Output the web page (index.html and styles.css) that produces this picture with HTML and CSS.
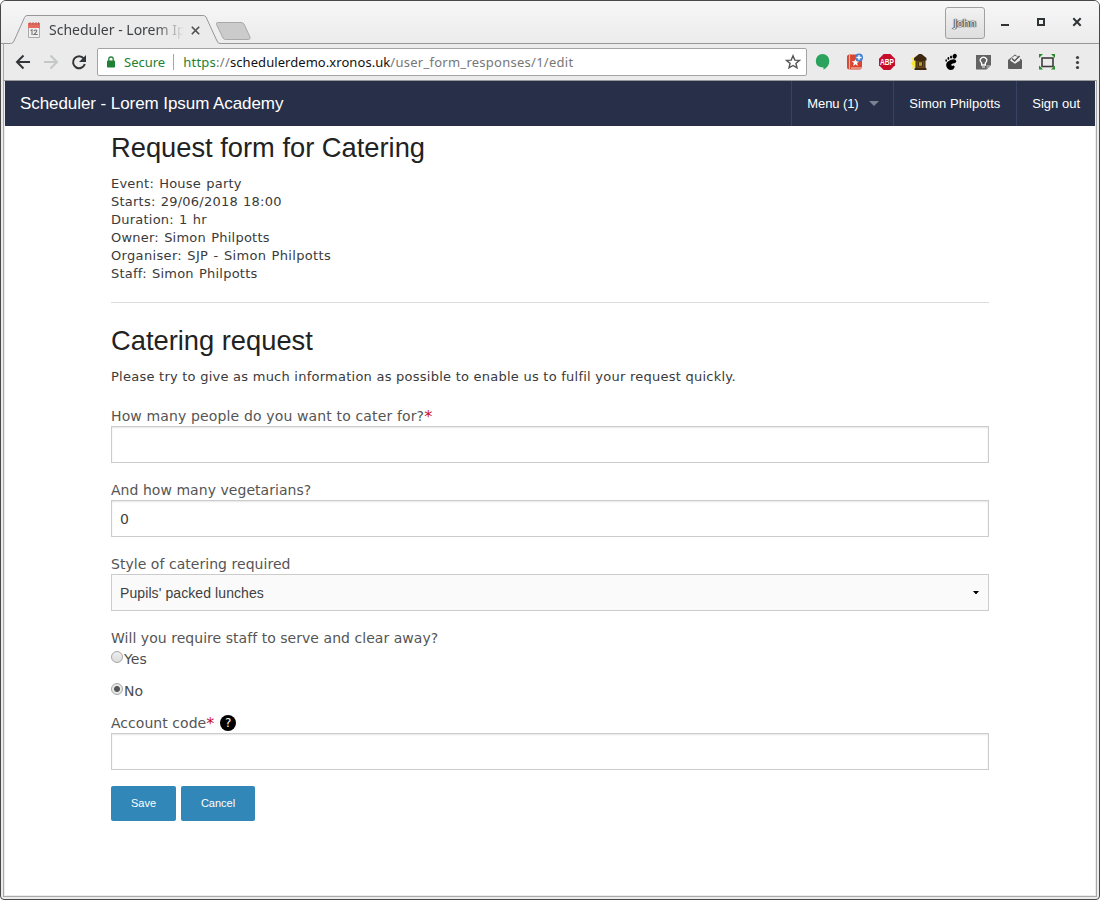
FILE: index.html
```html
<!DOCTYPE html>
<html lang="en">
<head>
<meta charset="utf-8">
<title>Scheduler - Lorem Ipsum Academy</title>
<link rel="stylesheet" href="styles.css">
</head>
<body>
<div class="window">
  <header class="titlebar">
    <svg class="tab-shape" width="1098" height="43" viewBox="1 1 1098 43">
      <path d="M5 44V43.5H10.5Q13 43.5 14 41L25 17Q26 15.500 27 15.500H203Q205 15.500 206 17L217 41Q218 43.500 220 43.500H1095V44Z" fill="#ebebeb"/>
      <path d="M1 43.500H10.500Q13 43.500 14 41L24.500 17.500Q25.500 15.500 27 15.500H203.500Q205 15.500 206 17L217 41Q218 43.500 220 43.500H1099" fill="none" stroke="#979797"/>
      <path d="M217.500 22.500H241Q243 22.500 244 24L250 37Q250.500 39.500 248.500 39.500H226Q224 39.500 223 38L216.500 24.500Q216 22.500 217.500 22.500Z" fill="#cbcbcb" stroke="#a9a9a9"/>
    </svg>
    <div class="tab">
      <svg class="favicon" width="12" height="16" viewBox="0 0 12 16"><path d="M.5 1.500H11.500V15.500H.5Z" fill="#f0f0f0" stroke="#aaa"/><path d="M0 1H12V6H0Z" fill="#e66c5f"/><path d="M2 0V3M5 0V3M8 0V3M10.500 0V3" stroke="#ad5751" stroke-width=".8"/><path d="M2.500 8.500L4 7.800V13M5.800 9Q8 7 8.800 8.800Q8.800 10 6 12.500H9.800" fill="none" stroke="#777" stroke-width="1.100"/></svg>
      <span class="tab-title">Scheduler - Lorem Ip</span>
      <svg class="tab-close" width="9" height="9" viewBox="0 0 9 9"><path d="M.8.8L8.200 8.200M8.200.8L.8 8.200" stroke="#4d4d4d" stroke-width="1.600"/></svg>
    </div>
    <div class="window-controls">
      <span class="profile">John</span>
      <svg width="88" height="16" viewBox="1000 15 88 16"><path d="M1001 25H1009" stroke="#2e3436" stroke-width="2"/><rect x="1038" y="19" width="6" height="6" fill="none" stroke="#2e3436" stroke-width="2"/><path d="M1073.300 18.300L1080.700 25.700M1080.700 18.300L1073.300 25.700" stroke="#2e3436" stroke-width="2"/></svg>
    </div>
  </header>
  <div class="toolbar">
    <svg class="nav" width="84" height="24" viewBox="8 50 84 24" fill="none" stroke="#333638" stroke-width="2"><path d="M30 62H17.500M23.500 55.500L17 62L23.500 68.500"/><path d="M44 62H56.500M50.500 55.500L57 62L50.500 68.500" stroke="#c5c7c7"/><path d="M83.700 58.400A6 6 0 1 0 84.800 64"/><path d="M86 55V62H79Z" fill="#333638" stroke="none"/></svg>
    <div class="address">
      <svg width="8" height="12" viewBox="0 0 8 12"><rect y="4.500" width="8" height="7" rx=".8" fill="#208134"/><path d="M1.800 5V3Q1.800 1 4 1Q6.200 1 6.200 3V5" fill="none" stroke="#208134" stroke-width="1.300"/></svg>
      <span class="secure">Secure</span>
      <span class="url"><span class="scheme">https</span><span class="slashes">://</span><span class="host">schedulerdemo.xronos.uk</span><span class="path">/user_form_responses/1/edit</span></span>
      <svg class="star" width="16" height="16" viewBox="0 0 16 16"><path d="M8 1.800L9.800 6.100L14.400 6.400L10.900 9.400L12 13.900L8 11.500L4 13.900L5.100 9.400L1.600 6.400L6.200 6.100Z" fill="none" stroke="#555" stroke-width="1.400"/></svg>
    </div>
    <svg class="extensions" width="280" height="24" viewBox="812 50 280 24">
      <path d="M822.500 54A6.800 6.800 0 0 1 829.300 61Q829.300 66.500 823.500 69.800V67.500Q815.800 67.300 815.800 61A6.800 6.800 0 0 1 822.500 54Z" fill="#2ba35c"/>
      <rect x="847" y="54.500" width="15" height="15" rx="2.500" fill="#d9452e"/><path d="M849.500 55V69.500" stroke="#f2b4a7" stroke-width="1.200"/><path d="M851 68H862" stroke="#f6d5cd"/><path d="M855.500 58.500L856.500 61.200L859.300 61.300L857.100 63L857.900 66L855.500 64.300L853.100 66L853.900 63L851.700 61.300L854.500 61.200Z" fill="#fff"/><circle cx="859" cy="57.500" r="4" fill="#4681d4"/><path d="M856.500 57.500H861.500M859 55V60" stroke="#fff" stroke-width="1.300"/>
      <path d="M883.700 54H890.300L895 58.700V65.300L890.300 70H883.700L879 65.300V58.700Z" fill="#c70d2c"/><text x="887" y="65.300" class="abp" textLength="14" lengthAdjust="spacingAndGlyphs">ABP</text>
      <path d="M911.500 57L914 59L916 58V68L914 67L911.500 69.500L913 66L911 63.500L913 61Z" fill="#f8e82b"/><path d="M919 54H921.500L926.500 58V60.500H925.500V67.500L926.500 68.500V70H914.500V68.500L915.500 67.500V60.500H914V58Z" fill="#3f2810"/><path d="M916.500 61H924.500V68H916.500Z" fill="#6e4a1a"/><path d="M918 61.500H923V66.500H918Z" fill="#3f2810"/><path d="M919 62.500H922V65.500H919Z" fill="#f1df3a"/><path d="M919 64H922" stroke="#3f2810" stroke-width=".7"/>
      <path d="M950.500 60Q955.500 58.300 956.300 61Q956.300 63.200 952.800 63.600Q950.800 64.200 951.300 65.300Q952 66.300 953.300 65.500Q955 65.300 954.500 67.500Q953.500 70 950.800 70Q947.500 69.800 946.300 66.300Q945.300 62 950.500 60Z" fill="#000"/><ellipse cx="954.700" cy="56.200" rx="2.100" ry="2.500" transform="rotate(25 954.700 56.200)"/><ellipse cx="951" cy="57" rx="1" ry="1.500"/><ellipse cx="948.400" cy="58.500" rx=".9" ry="1.400"/><ellipse cx="946.200" cy="60.500" rx=".8" ry="1.200"/>
      <path d="M976 55H991V65L986.500 69.500H976Z" fill="#636363"/><path d="M986.500 69.500V65H991Z" fill="#999"/><path d="M981.700 65V63.300Q979.500 61 980.300 59.200Q983.500 55 986.700 59.200Q987.500 61 985.300 63.300V65Z" fill="none" stroke="#fff" stroke-width="1.400"/><path d="M982 67H985" stroke="#fff"/>
      <path d="M1008 60L1015 54.500L1022 60V68Q1022 69 1021 69H1009Q1008 69 1008 68Z" fill="#5d5d5d"/><path d="M1010 60.500L1012 57.500L1015 55.700L1020 58V60.500L1015 63.700Z" fill="#eee"/><path d="M1012 58.500L1014.500 61L1019.500 56" fill="none" stroke="#555" stroke-width="1.500"/>
      <rect x="1042" y="58" width="11" height="8.500" fill="none" stroke="#3d3d3d" stroke-width="1.600"/><path d="M1039 54H1043L1039 58ZM1055 54V58L1051 54ZM1055 69.500H1051L1055 65.500ZM1039 69.500V65.500L1043 69.500Z" fill="#25882b"/>
      <g fill="#3c4043"><circle cx="1077.500" cy="57.500" r="1.600"/><circle cx="1077.500" cy="62.500" r="1.600"/><circle cx="1077.500" cy="67.500" r="1.600"/></g>
    </svg>
  </div>
  <div class="page">
    <nav class="topbar">
      <span class="brand">Scheduler - Lorem Ipsum Academy</span>
      <span class="item menu">Menu (1)</span><span class="item user">Simon Philpotts</span><span class="item">Sign out</span>
    </nav>
    <main class="content">
      <h1>Request form for Catering</h1>
      <p class="details">Event: House party<br>Starts: 29/06/2018 18:00<br>Duration: 1 hr<br>Owner: Simon Philpotts<br><span class="organiser">Organiser: SJP - Simon Philpotts</span><br>Staff: Simon Philpotts</p>
      <hr>
      <h1>Catering request</h1>
      <p class="intro">Please try to give as much information as possible to enable us to fulfil your request quickly.</p>
      <form>
        <div class="field"><label class="wide">How many people do you want to cater for?<b>*</b></label><div class="control"></div></div>
        <div class="field"><label>And how many vegetarians?</label><div class="control">0</div></div>
        <div class="field"><label>Style of catering required</label><div class="control select">Pupils' packed lunches<svg width="6" height="4" viewBox="0 0 6 4"><path d="M0 0H6L3.500 3H2.500Z"/></svg></div></div>
        <div class="choices"><label>Will you require staff to serve and clear away?</label>
          <div class="choice"><i class="radio"></i>Yes</div>
          <div class="choice"><i class="radio checked"></i>No</div>
        </div>
        <div class="field"><label>Account code<b>*</b><span class="help">?</span></label><div class="control"></div></div>
        <div class="buttons"><span class="button save">Save</span><span class="button cancel">Cancel</span></div>
      </form>
    </main>
  </div>
</div>
</body>
</html>
```
FILE: styles.css
```css
* { box-sizing: border-box; }
body { margin: 0; background: #fff; font-family: "DejaVu Sans", sans-serif; }
svg { display: block; flex: none; }
.window { width: 1100px; height: 900px; border: 1px solid #484848; border-radius: 6px 6px 4px 4px; background: #ebebeb; display: flex; flex-direction: column; overflow: hidden; }
.titlebar { height: 43px; flex: none; position: relative; display: flex; justify-content: space-between; background: linear-gradient(#f7f7f7, #ebebeb); }
.tab-shape { position: absolute; left: 0; top: 0; }
.tab { position: relative; display: flex; align-items: center; padding: 15px 0 0 27px; height: 43px; }
.tab-title { margin-left: 9px; width: 138px; white-space: nowrap; font: 14px/20px "Noto Sans", sans-serif; color: #3f4244; -webkit-mask-image: linear-gradient(90deg, #000 106px, transparent 135px); mask-image: linear-gradient(90deg, #000 106px, transparent 135px); }
.tab-close { margin-left: 4px; }
.window-controls { position: relative; display: flex; align-items: center; gap: 15px; padding-right: 11px; }
.profile { width: 40px; height: 32px; margin-top: 1px; border: 1px solid #a0a0a0; border-radius: 3px; background: linear-gradient(#f2f2f2, #dedede); text-align: center; font: 10.500px/31px "Noto Sans", sans-serif; color: #eee; text-shadow: 0 0 1px #333, 0 0 1px #333, 1px 0 1px #555, -1px 0 1px #555; }
.toolbar { height: 36px; flex: none; display: flex; align-items: center; margin: 0 3px 0 2px; border: solid #a8a8a8; border-width: 0 0 0 1px; padding-left: 4px; }
.address { width: 710px; height: 28px; margin-left: 5px; border: 1px solid #a3a3a3; border-radius: 2px; background: #fff; display: flex; align-items: center; padding: 0 5px 0 9px; font: 13px/20px "Noto Sans", sans-serif; }
.secure { color: #208134; margin-left: 9px; padding-right: 8px; border-right: 1px solid #a6a6a6; line-height: 16px; }
.url { margin-left: 9px; color: #777; white-space: nowrap; }
.scheme { color: #208134; letter-spacing: .25px; }
.slashes { letter-spacing: .25px; }
.host { color: #111; letter-spacing: .06px; }
.path { letter-spacing: .26px; }
.star { margin-left: auto; }
.extensions { margin-left: 5px; }
.abp { font: bold 8.500px "Liberation Sans", sans-serif; fill: #fff; text-anchor: middle; }
.page { flex: 1; margin: 0 2px 2px; border: 1px solid #aaa; border-top-color: #999; background: #fff; box-shadow: inset 0 0 0 1px #ececec; padding: 0 1px; }
.topbar { height: 45px; background: #272f49; display: flex; align-items: stretch; font: 13px/45px "Liberation Sans", sans-serif; color: #fff; }
.brand { flex: 1; padding-left: 15px; font-size: 17px; letter-spacing: -.07px; }
.item { border-left: 1px solid #384265; padding: 0 15px; white-space: nowrap; }
.user { width: 123px; letter-spacing: .05px; }
.menu { width: 102px; display: flex; align-items: center; letter-spacing: -.1px; }
.menu::after { content: ""; margin-left: 10px; border: 5px solid transparent; border-top-color: #7d8292; border-bottom: 0; }
.content { width: 878px; margin-left: 106px; color: #3a3a3a; }
h1 { margin: 0; padding-top: 3px; font: 27.300px/38px "Liberation Sans", sans-serif; color: #222; height: 49px; }
p { margin: 0; font-size: 13px; line-height: 18px; }
.details { height: 108px; letter-spacing: .23px; word-spacing: .8px; }
.organiser { letter-spacing: .34px; }
hr { margin: 19px 0 16px; border: 0; border-top: 1px solid #ddd; }
.intro { margin-bottom: 19px; letter-spacing: .245px; }
.field { height: 74px; }
label { display: flex; align-items: center; height: 21px; font-size: 14px; color: #555; white-space: nowrap; letter-spacing: .04px; }
.wide { letter-spacing: .14px; }
b { font-weight: normal; font-size: 16px; line-height: 14px; margin-top: 3px; color: #c60f2b; }
.control { height: 37px; border: 1px solid #ccc; box-shadow: inset 0 1px 2px rgba(0,0,0,.1); padding: 1px 8px 0; font-size: 14px; line-height: 35px; color: #404040; }
.select { display: flex; align-items: center; justify-content: space-between; padding-right: 9px; background: #fafafa; box-shadow: none; font-family: "Liberation Sans", sans-serif; letter-spacing: .09px; }
.select svg { margin-top: -1px; }
.choices { height: 85px; padding-bottom: 1px; }
.choice { display: flex; height: 32px; font-size: 14px; line-height: 23px; color: #4d4d4d; letter-spacing: .1px; }
.radio { width: 12px; height: 12px; margin: 3px 1px 0 0; border: 1px solid #a6a6a6; border-radius: 50%; background: linear-gradient(#eee, #ddd); }
.checked { background: radial-gradient(circle, #555 2.500px, #e7e7e7 3.500px); }
.help { width: 16px; height: 16px; margin-left: 6px; border-radius: 50%; background: #000; color: #fff; font-size: 12px; line-height: 16px; text-align: center; }
.buttons { display: flex; gap: 5px; }
.button { height: 35px; border-radius: 2px; background: #3187b7; color: #fff; font: 11px/35px "Liberation Sans", sans-serif; text-align: center; }
.save { width: 65px; }
.cancel { width: 74px; }
```
